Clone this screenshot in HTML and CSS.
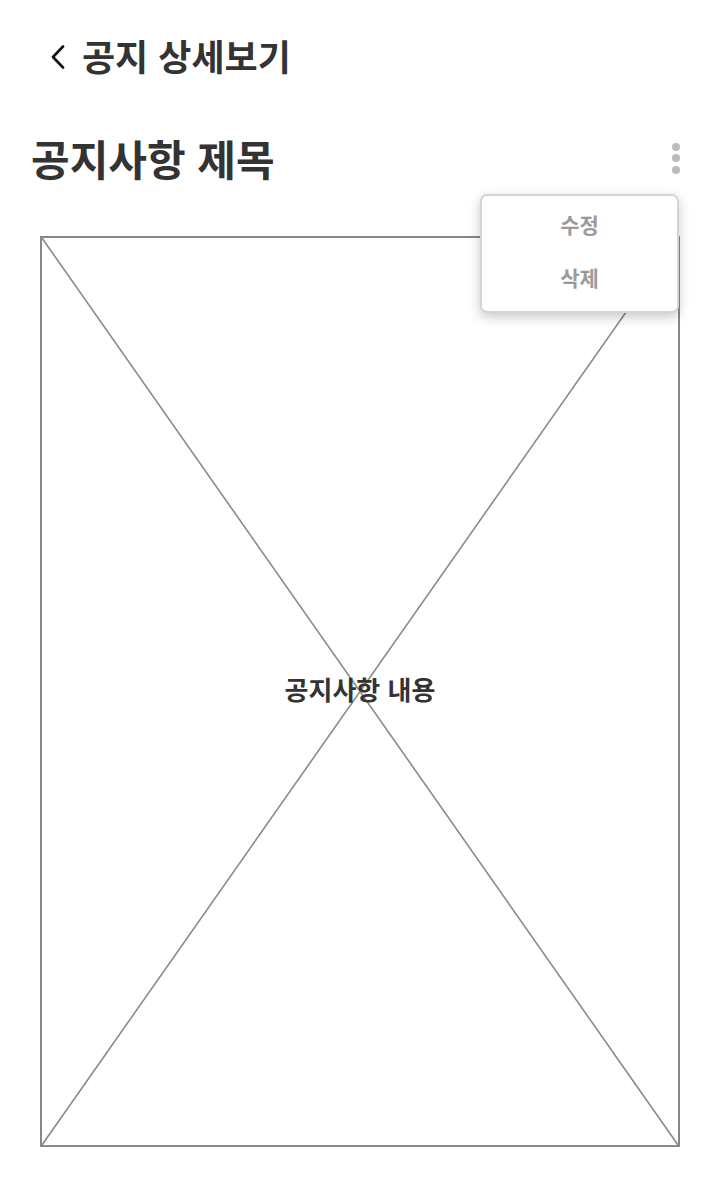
FILE: index.html
```html
<!DOCTYPE html>
<html lang="ko">
<head>
<meta charset="utf-8">
<title>공지 상세보기</title>
<link rel="stylesheet" href="styles.css">
</head>
<body>
<div class="page">
  <header class="topbar">
    <svg class="back" width="16" height="24" viewBox="0 0 16 24" aria-hidden="true">
      <polyline points="13,1.5 3,12 13,22.5" fill="none" stroke="#111" stroke-width="2.6" stroke-linecap="round" stroke-linejoin="round"/>
    </svg>
    <h1 class="topbar-title">공지 상세보기</h1>
  </header>

  <section class="title-row">
    <h2 class="notice-title">공지사항 제목</h2>
    <div class="kebab" aria-label="더보기">
      <span class="dot"></span>
      <span class="dot"></span>
      <span class="dot"></span>
    </div>
  </section>

  <div class="content-box">
    <svg class="cross" viewBox="0 0 100 100" preserveAspectRatio="none" aria-hidden="true">
      <line x1="0" y1="0" x2="100" y2="100" vector-effect="non-scaling-stroke"/>
      <line x1="100" y1="0" x2="0" y2="100" vector-effect="non-scaling-stroke"/>
    </svg>
    <p class="content-text">공지사항 내용</p>
  </div>

  <ul class="menu">
    <li class="menu-item">수정</li>
    <li class="menu-item">삭제</li>
  </ul>
</div>
</body>
</html>
```

FILE: styles.css
```css
* {
  box-sizing: border-box;
}

html, body {
  margin: 0;
  padding: 0;
  background: #ffffff;
}

body {
  font-family: "Noto Sans CJK KR", "Noto Sans", sans-serif;
  color: #333333;
}

.page {
  position: relative;
  width: 718px;
  min-height: 1196px;
  padding: 0 38px 0 40px;
}

.topbar {
  height: 114px;
  display: flex;
  align-items: center;
  gap: 16px;
  padding-left: 10px;
}

.back {
  display: block;
  flex: none;
}

.topbar-title {
  margin: 0 0 4px;
  font-size: 36px;
  font-weight: 700;
  line-height: 1;
  color: #333333;
  letter-spacing: 0;
}

.title-row {
  height: 90px;
  display: flex;
  align-items: center;
  justify-content: space-between;
  margin-left: -9px;
}

.notice-title {
  margin: 0 0 2px;
  font-size: 42px;
  font-weight: 700;
  line-height: 1;
  color: #333333;
}

.kebab {
  display: flex;
  flex-direction: column;
  gap: 3.5px;
  margin-right: 0;
  padding-bottom: 2px;
}

.dot {
  display: block;
  width: 8px;
  height: 8px;
  border-radius: 50%;
  background: #bcbcbc;
}

.content-box {
  position: relative;
  margin-top: 32px;
  height: 911px;
  border: 2px solid #888888;
  display: flex;
  align-items: center;
  justify-content: center;
}

.cross {
  position: absolute;
  inset: 0;
  width: 100%;
  height: 100%;
}

.cross line {
  stroke: #8a8a8a;
  stroke-width: 1.6;
}

.content-text {
  position: relative;
  margin: 0 0 6px;
  font-size: 26px;
  font-weight: 700;
  color: #333333;
}

.menu {
  position: absolute;
  top: 194px;
  left: 480px;
  width: 199px;
  height: 119px;
  margin: 0;
  padding: 1px 0 10px;
  list-style: none;
  background: #ffffff;
  border: 2px solid #d4d4d4;
  border-radius: 7px;
  box-shadow: 0 4px 12px rgba(0, 0, 0, 0.22);
}

.menu-item {
  height: 53px;
  display: flex;
  align-items: center;
  justify-content: center;
  font-size: 21px;
  font-weight: 700;
  color: #9a9a9a;
}
```
